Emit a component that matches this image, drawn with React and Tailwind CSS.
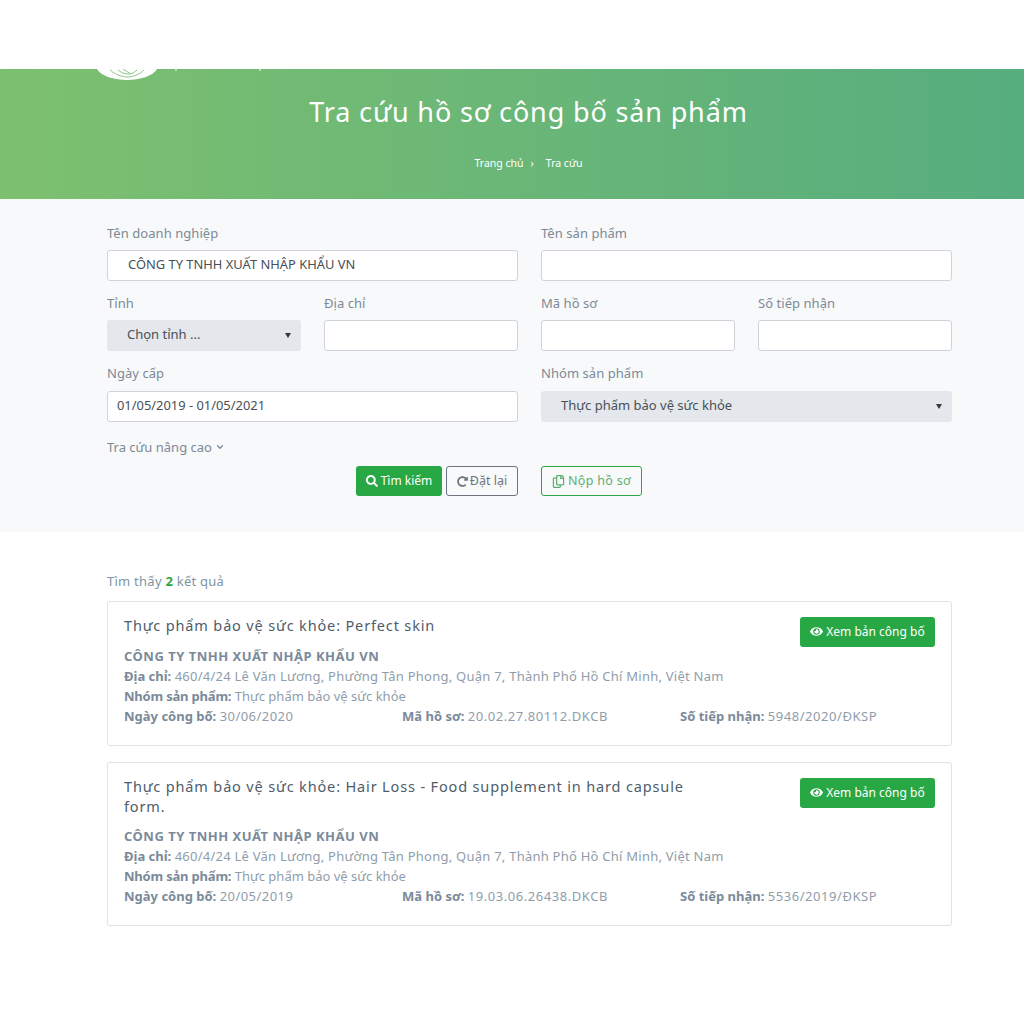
import React from "react";
import { ChevronDown } from "lucide-react";
import { FaSearch, FaRedoAlt, FaEye, FaRegCopy } from "react-icons/fa";

const font = "font-['Noto_Sans','Open_Sans',sans-serif]";

const Input = ({ value, pad = "pl-[20px]" }) => (
  <div className={`h-[31px] pb-[1px] bg-white border border-[#ced4da] rounded-[3px] ${pad} flex items-center text-[12.9px] text-[#495057]`}>
    {value}
  </div>
);

const Select = ({ value }) => (
  <div className="h-[31px] pb-[1px] bg-[#e4e7eb] rounded-[3px] pl-[20px] pr-[10px] flex items-center justify-between text-[13px] text-[#495057]">
    <span>{value}</span>
    <span className="w-0 h-0 border-x-[3px] border-x-transparent border-t-[5px] border-t-[#343a40]"></span>
  </div>
);

const Field = ({ label, last, children }) => (
  <div>
    <div className={`h-[21px] ${last ? "mb-[7px]" : "mb-[6px]"} text-[13px] leading-[21px] tracking-[0.05px] text-[#7c8a97]`}>{label}</div>
    {children}
  </div>
);

const Card = ({ title, date, code, receipt, mt }) => (
  <div className={`border border-[#dfe3e7] rounded-[3px] px-[16px] pt-[15px] pb-[19px] ${mt}`}>
    <div className="flex justify-between items-start">
      <div className="w-[590px] -mt-[1px] text-[14.5px] leading-[19.5px] tracking-[0.85px] text-[#4f5d6b]">{title}</div>
      <button className="w-[135px] h-[30px] pb-[1px] -mb-[11px] bg-[#28a745] rounded-[3px] text-white text-[12px] flex items-center justify-center gap-[3px]">
        <FaEye size={13} />
        Xem bản công bố
      </button>
    </div>
    <div className="mt-[10px] text-[13px] leading-[20px] text-[#8f9dab]">
      <div className="font-bold tracking-[0.5px] text-[#7b8a9a]">CÔNG TY TNHH XUẤT NHẬP KHẨU VN</div>
      <div><b className="text-[#7b8a9a]">Địa chỉ:</b> <span className="tracking-[0.24px]">460/4/24 Lê Văn Lương, Phường Tân Phong, Quận 7, Thành Phố Hồ Chí Minh, Việt Nam</span></div>
      <div><b className="tracking-[-0.2px] text-[#7b8a9a]">Nhóm sản phẩm:</b> Thực phẩm bảo vệ sức khỏe</div>
      <div className="grid grid-cols-[278px_278px_1fr]">
        <div><b className="text-[#7b8a9a]">Ngày công bố:</b> <span className="tracking-[0.45px]">{date}</span></div>
        <div><b className="text-[#7b8a9a]">Mã hồ sơ:</b> <span className="tracking-[0.55px]">{code}</span></div>
        <div><b className="text-[#7b8a9a]">Số tiếp nhận:</b> <span className="tracking-[0.55px]">{receipt}</span></div>
      </div>
    </div>
  </div>
);

export default function App() {
  return (
    <div className={`min-h-[1024px] bg-white ${font}`}>
      <div className="h-[69px]"></div>

      <header className="relative h-[130px] overflow-hidden bg-gradient-to-r from-[#7dc06f] to-[#56ad7e] text-white text-center pl-[33px]">
        {/* bottom edge of the cropped logo */}
        <svg className="absolute left-[97px] top-0" width="170" height="12" viewBox="0 0 170 12">
          <path d="M0 0C4 7 17 11 30 11C43 11 56 7 60 0Z" fill="#fff" />
          <path d="M13 1C19 6 25 8 31 8C37 8 43 5 47 1M21 1C25 4 28 5 31 5C34 5 37 4 40 1M26 0L34 5" fill="none" stroke="#8cc785" strokeWidth="1" />
          <path d="M79 0v2M163 0v2" stroke="#fff" strokeWidth="1" />
        </svg>
        <h1 className="pt-[24px] text-[27px] leading-[37px] tracking-[0.85px] font-normal">Tra cứu hồ sơ công bố sản phẩm</h1>
        <div className="mt-[26px] flex justify-center items-center text-[10.5px] leading-[14px]">
          <span>Trang chủ</span>
          <span className="mx-[7px]">›</span>
          <span className="ml-[5px]">Tra cứu</span>
        </div>
      </header>

      <section className="h-[333px] bg-[#f8f9fa] px-[107px] pt-[24px]">
        <div className="w-[845px] grid grid-cols-2 gap-x-[23px] gap-y-[12px]">
          <Field label="Tên doanh nghiệp"><Input value="CÔNG TY TNHH XUẤT NHẬP KHẨU VN" /></Field>
          <Field label="Tên sản phẩm"><Input /></Field>

          <div className="grid grid-cols-2 gap-x-[23px]">
            <Field label="Tỉnh"><Select value="Chọn tỉnh ..." /></Field>
            <Field label="Địa chỉ"><Input /></Field>
          </div>
          <div className="grid grid-cols-2 gap-x-[23px]">
            <Field label="Mã hồ sơ"><Input /></Field>
            <Field label="Số tiếp nhận"><Input /></Field>
          </div>

          <Field label="Ngày cấp" last><Input value="01/05/2019 - 01/05/2021" pad="pl-[9px]" /></Field>
          <Field label="Nhóm sản phẩm" last><Select value="Thực phẩm bảo vệ sức khỏe" /></Field>
        </div>

        <div className="mt-[15px] flex items-center gap-[3px] text-[13px] leading-[20px] text-[#7c8a97]">
          Tra cứu nâng cao <ChevronDown size={10} strokeWidth={3} />
        </div>

        <div className="w-[845px] mt-[9px] grid grid-cols-2 gap-x-[23px]">
          <div className="flex justify-end gap-[4px]">
            <button className="w-[86px] h-[30px] bg-[#28a745] rounded-[3px] text-white text-[12px] flex items-center justify-center gap-[3px]">
              <FaSearch size={12} />
              Tìm kiếm
            </button>
            <button className="w-[72px] h-[30px] border border-[#6c757d] rounded-[3px] text-[#6c757d] text-[12.5px] flex items-center justify-center gap-[2px]">
              <FaRedoAlt size={11} />
              Đặt lại
            </button>
          </div>
          <div>
            <button className="w-[101px] h-[30px] border border-[#28a745] rounded-[3px] text-[#5cae70] text-[12.5px] tracking-[0.3px] flex items-center justify-center gap-[3px]">
              <FaRegCopy size={13} />
              Nộp hồ sơ
            </button>
          </div>
        </div>
      </section>

      <main className="w-[845px] ml-[107px] pt-[39px]">
        <div className="h-[20px] mb-[10px] text-[13px] leading-[20px] tracking-[0.25px] text-[#7f95a3]">
          Tìm thấy <b className="text-[#28a745]">2</b> kết quả
        </div>
        <Card
          title="Thực phẩm bảo vệ sức khỏe: Perfect skin"
          date="30/06/2020"
          code="20.02.27.80112.DKCB"
          receipt="5948/2020/ĐKSP"
        />
        <Card
          mt="mt-[16px]"
          title="Thực phẩm bảo vệ sức khỏe: Hair Loss - Food supplement in hard capsule form."
          date="20/05/2019"
          code="19.03.06.26438.DKCB"
          receipt="5536/2019/ĐKSP"
        />
      </main>
    </div>
  );
}
